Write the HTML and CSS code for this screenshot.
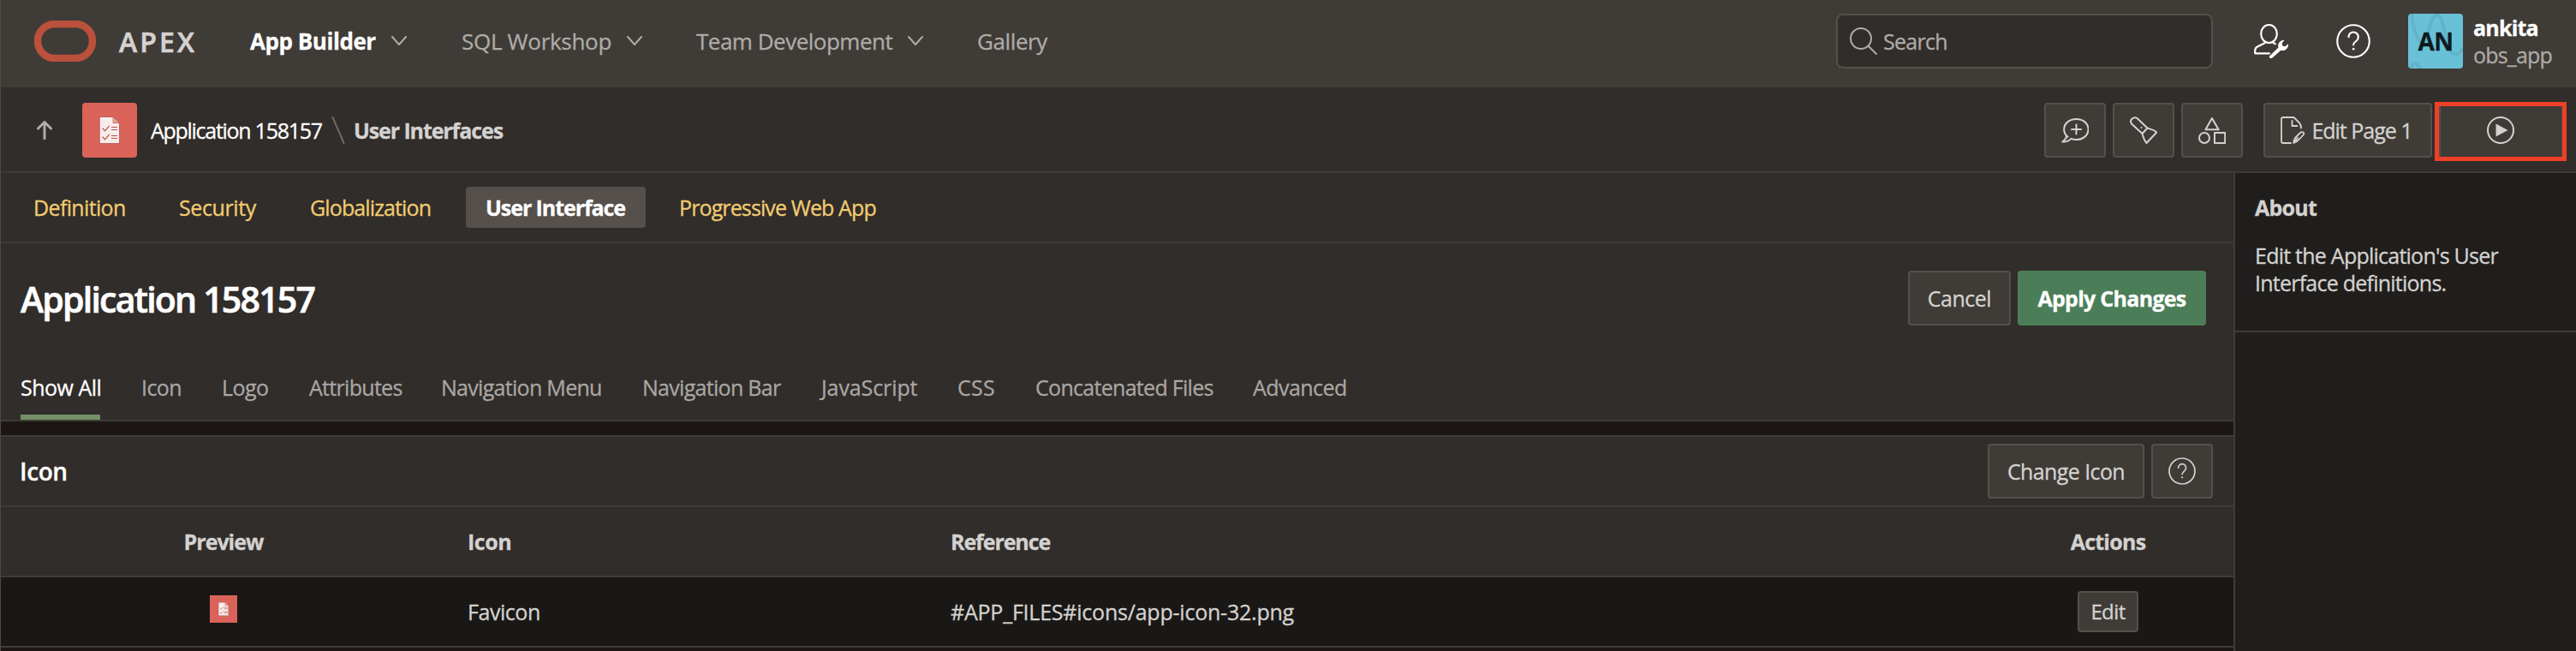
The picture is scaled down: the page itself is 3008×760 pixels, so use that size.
FILE: index.html
```html
<!DOCTYPE html>
<html lang="en">
<head>
<meta charset="utf-8">
<title>User Interfaces</title>
<link rel="stylesheet" href="styles.css">
</head>
<body>
<svg class="defs" width="0" height="0">
  <symbol id="chevron" viewBox="0 0 18 12"><path d="M1 1l8 9 8-9"/></symbol>
  <symbol id="help" viewBox="0 0 32 32"><circle cx="16" cy="16" r="15"/><path d="M11.600 12.200a4.500 4.500 0 1 1 7.400 3.400c-1.700 1.300-2.900 2.100-2.900 4"/><circle class="dot" cx="16.100" cy="23.300" r="1.100"/></symbol>
  <symbol id="doc" viewBox="0 0 64 64">
    <path fill="#f7eceb" stroke="#b5524a" stroke-width=".8" d="M20.500 16.500h16l7 7v24h-23z"/>
    <path fill="#e9a8a2" stroke="#b5524a" stroke-width=".8" d="M36.500 16.500l7 7h-7z"/>
    <path fill="none" stroke="#b5524a" stroke-width="1.200" d="M24 30l2.500 2.800 5-5.600M24 40l2.500 2.800 5-5.600M34.500 28.500h6M34.500 31.500h6M34.500 38.500h6M34.500 41.500h6"/>
  </symbol>
</svg>
<div class="app">
  <header class="header">
    <svg class="logo" viewBox="0 0 72 48"><rect x="4" y="4" width="64" height="40" rx="20"/></svg>
    <span class="brand">APEX</span>
    <nav class="mainnav">
      <a class="current">App Builder<svg class="chev"><use href="#chevron"/></svg></a>
      <a>SQL Workshop<svg class="chev"><use href="#chevron"/></svg></a>
      <a>Team Development<svg class="chev"><use href="#chevron"/></svg></a>
      <a>Gallery</a>
    </nav>
    <div class="search">
      <svg viewBox="0 0 32 32"><circle cx="13" cy="13" r="12"/><path d="M21.500 21.500L31 31"/></svg>
      <span>Search</span>
    </div>
    <svg class="admin" viewBox="0 0 40 40">
      <ellipse cx="17.500" cy="11.500" rx="9.300" ry="10.500"/>
      <path d="M12.500 20.500v1.800L4 26.500q-2.800 1.400-2.800 4.500v3.300H18M22.500 20.500v1.500l2.300 1.200"/>
      <path class="wrench" d="M18 37.500l10.500-10c-1.200-3.600.8-7.600 5.500-8.800l1.500.4-2.800 3.200.6 3.300 3.200.7 2.900-2.900.6 1.200c-.3 4.600-4.200 7.500-8.600 6.200L21.500 39.600c-1 .8-2.300.9-3 0-.8-.7-.9-1.500-.5-2.100z"/>
    </svg>
    <svg class="help"><use href="#help"/></svg>
    <div class="avatar">
      <svg viewBox="0 0 64 64"><path d="M4 0c2 20 8 36 14 33S24 6 32 2s10 20 14 34 12 14 17 6M4 62c2-6 7-5 10 2"/></svg>
      <span>AN</span>
    </div>
    <div class="user"><b>ankita</b><span>obs_app</span></div>
  </header>

  <div class="bar">
    <svg class="up" viewBox="0 0 18 22"><path d="M9 21V2M1.500 9L9 1.500 16.500 9"/></svg>
    <svg class="appicon"><use href="#doc"/></svg>
    <span class="crumb">Application 158157</span>
    <svg class="slash" viewBox="0 0 16 32"><path d="M1.500 1l13 30"/></svg>
    <span class="crumb last">User Interfaces</span>
    <div class="tools">
      <button class="btn square"><svg viewBox="0 0 32 32"><path d="M7.500 23.800C4.800 21.700 3.200 18.700 3.200 15 3.200 8 9.500 3 17.500 3S31.500 8 31.500 15 25.500 27 17.500 27c-2.300 0-4.300-.4-6-1.100C9 28.500 5.500 30 1.200 29.500c3-2 4.800-4 4.700-7M17.500 9.500v11M12 15h11"/></svg></button>
      <button class="btn square"><svg viewBox="0 0 32 32"><path d="M14.500 20L2 8.500C-.8 4.500 4 -.5 8.500 2L20.500 13.500zM20.500 13.500c3.500 1.500 7.500 1.500 10.800 5L19.500 31c-3.500-3.500-3.500-7-5-11"/><circle class="dot" cx="13.500" cy="13" r="1"/></svg></button>
      <button class="btn square"><svg viewBox="0 0 32 32"><path d="M16 2l7.600 13.300H8.400zM19 19h12.200v12H19z"/><circle cx="7" cy="25" r="6"/></svg></button>
      <button class="btn edit"><svg viewBox="0 0 28 32"><path d="M12 31H3q-2 0-2-2V3q0-2 2-2h12.500L22 7.500q2 2 2 6M13.500 5V11H19.500M15.300 31c0-3 1.200-5.500 3.200-7.500l4.500-4.500c1.500-1.500 5.200-1 4 2l-5.500 6c-1.700 2-3.500 3.300-6.200 4zl5-6"/></svg><span>Edit Page 1</span></button>
      <button class="btn run"><svg viewBox="0 0 32 32"><circle cx="16" cy="16" r="15"/><path class="play" d="M10.500 8.500L24.500 16l-14 7.500z"/></svg></button>
    </div>
  </div>

  <div class="body">
    <main class="main">
      <nav class="subnav">
        <a>Definition</a><a>Security</a><a>Globalization</a><a class="current">User Interface</a><a>Progressive Web App</a>
      </nav>
      <div class="title">
        <h1>Application 158157</h1>
        <button class="btn cancel">Cancel</button>
        <button class="btn apply">Apply Changes</button>
      </div>
      <nav class="tabs">
        <a class="current">Show All</a><a>Icon</a><a>Logo</a><a>Attributes</a><a>Navigation Menu</a><a>Navigation Bar</a><a>JavaScript</a><a>CSS</a><a>Concatenated Files</a><a>Advanced</a>
      </nav>
      <section class="region">
        <div class="region-head">
          <h2>Icon</h2>
          <button class="btn change">Change Icon</button>
          <button class="btn square"><svg><use href="#help"/></svg></button>
        </div>
        <div class="row head">
          <div class="center preview">Preview</div><div class="ic">Icon</div><div class="ref">Reference</div><div class="center act">Actions</div>
        </div>
        <div class="row">
          <div class="center"><svg class="favicon"><use href="#doc"/></svg></div>
          <div class="ic">Favicon</div>
          <div class="ref">#APP_FILES#icons/app-icon-32.png</div>
          <div class="center"><button class="btn small">Edit</button></div>
        </div>
      </section>
    </main>
    <aside class="side">
      <section>
        <h3>About</h3>
        <p>Edit the Application's User<br>Interface definitions.</p>
      </section>
    </aside>
  </div>
</div>
</body>
</html>
```
FILE: styles.css
```css
* { box-sizing: border-box; }
body { margin: 0; background: #201e1c; }
.defs { position: absolute; }
svg { display: block; fill: none; stroke: currentColor; stroke-width: 2; stroke-linecap: round; stroke-linejoin: round; flex: none; }
.dot, .play, .wrench { fill: currentColor; stroke: none; }
h1, h2, h3, p { margin: 0; }

.app {
  position: relative;
  width: 3008px;
  height: 760px;
  overflow: hidden;
  font: 25px/32px "Open Sans", "Noto Sans", sans-serif;
  letter-spacing: -.7px;
  -webkit-text-stroke: .3px currentColor;
  color: #d4d2d0;
  white-space: nowrap;
}
.app::before { content: ""; position: absolute; left: 0; top: 0; width: 1px; height: 100%; background: #4b4845; }

.header { display: flex; align-items: center; height: 102px; padding: 0 28px 6px 40px; background: #3f3b36; }
.logo { width: 72px; height: 48px; stroke: #bb503d; stroke-width: 8.500; }
.brand { width: 153px; margin-left: 27px; font-size: 32px; font-weight: 600; letter-spacing: 3.100px; padding-top: 1px; -webkit-text-stroke-width: .7px; }
.mainnav { display: grid; grid-template-columns: 247px 274px 328px 1fr; flex: 1; font-size: 26px; letter-spacing: -.3px; color: #aeaba8; }
.mainnav a { display: flex; align-items: center; }
.mainnav a:nth-child(3) { letter-spacing: -.5px; }
.mainnav a:nth-child(4) { letter-spacing: -.4px; }
.mainnav .current { font-weight: 700; letter-spacing: -.45px; color: #fff; }
.chev { width: 18px; height: 12px; margin-left: 18px; color: #aeaba8; }
.search { display: flex; align-items: center; width: 440px; height: 64px; padding: 0 14px; gap: 7px; border: 2px solid #55504b; border-radius: 8px; background: #312d2a; color: #aeaba8; }
.search svg { width: 32px; height: 32px; }
.admin { width: 40px; height: 40px; margin-left: 48px; margin-right: 56px; color: #fff; stroke-width: 2.200; }
.help { width: 40px; height: 40px; margin-right: 44px; color: #fff; stroke-width: 1.700; }
.avatar { position: relative; display: flex; align-items: center; justify-content: center; width: 64px; height: 64px; border-radius: 4px; overflow: hidden; background: #69c1d7; color: #0d1a1d; font-size: 28px; font-weight: 700; letter-spacing: -.5px; }
.avatar svg { position: absolute; inset: 0; stroke: #60b3c9; stroke-width: 4; }
.avatar span { position: relative; }
.user { display: flex; flex-direction: column; width: 104px; padding-left: 12px; color: #aeaba8; letter-spacing: -.8px; }
.user b { color: #fff; }

.bar { display: flex; align-items: center; height: 98px; padding: 2px 11px 0 43px; background: #312d2a; }
.up { width: 18px; height: 22px; stroke: #aeaba8; stroke-width: 3; }
.appicon { width: 64px; height: 64px; margin: 0 16px 0 35px; border-radius: 4px; background: #da635a; }
.crumb { width: 211px; color: #fff; letter-spacing: -1.280px; }
.slash { width: 16px; height: 32px; margin-right: 10px; color: #6e6a66; }
.crumb.last { font-weight: 700; color: #d4d2d0; letter-spacing: -1.100px; }
.tools { display: flex; align-items: center; margin-left: auto; }

.btn { display: flex; align-items: center; justify-content: center; flex: none; height: 64px; padding: 0; border: 2px solid #55504b; border-radius: 4px; background: #3f3b36; font: inherit; letter-spacing: -.6px; color: #d4d2d0; }
.btn svg { width: 32px; height: 32px; }
.square { width: 72px; margin-right: 8px; }
.edit { width: 197px; margin-left: 16px; padding-right: 3px; gap: 8px; letter-spacing: -1px; }
.edit svg { width: 28px; stroke-width: 1.800; }
.run { width: 154px; height: 69px; margin: 3px 0 0 3px; border: 5px solid #ee4026; border-radius: 0; box-shadow: inset 2px 0 #55504b, inset -1px 0 #55504b; }
.run svg { margin-top: -4px; }

.body { display: flex; height: 560px; border-top: 2px solid #3f3b37; }
.main { width: 2608px; background: #1c1715; }
.side { flex: 1; border-left: 2px solid #3f3b37; background: #201e1c; }
.side section { height: 186px; padding: 24px 24px 24px 23px; border-bottom: 2px solid #3f3b37; letter-spacing: -.76px; }
.side h3 { margin-bottom: 24px; font-size: 25px; }

.subnav { display: grid; grid-template-columns: 170px 153px 205px 226px 1fr; align-items: center; height: 82px; padding-left: 16px; border-bottom: 2px solid #3f3b37; background: #312d2a; color: #f1cc71; }
.subnav a { padding: 8px 23px; letter-spacing: -.65px; }
.subnav a:nth-child(2) { letter-spacing: -.4px; }
.subnav a:nth-child(n+3) { letter-spacing: -.88px; }
.subnav .current { width: 210px; border-radius: 4px; background: #55504b; color: #fff; font-weight: 700; letter-spacing: -1.070px !important; }

.title { display: flex; align-items: center; gap: 8px; height: 128px; padding: 0 32px 0 24px; background: #312d2a; }
.title h1 { flex: 1; font-size: 41px; line-height: 48px; font-weight: 600; letter-spacing: -1.780px; color: #fff; padding-top: 2px; -webkit-text-stroke-width: .7px; }
.cancel { width: 120px; letter-spacing: -.5px; }
.apply { width: 220px; border-color: #4b7e58; background: #4b7e58; color: #fff; font-weight: 700; letter-spacing: -.72px; }

.tabs { display: grid; grid-template-columns: 141px 94px 102px 154px 235px 209px 159px 91px 254px 1fr; height: 80px; padding-left: 24px; border-bottom: 2px solid #3f3b37; background: #312d2a; color: #a9a6a3; }
.tabs a { padding-top: 24px; }
.tabs .current { width: 93px; border-bottom: 6px solid #739067; color: #fff; letter-spacing: -.5px; }
.tabs a:nth-child(2), .tabs a:nth-child(3), .tabs a:nth-child(10) { letter-spacing: -.55px; }
.tabs a:nth-child(7) { letter-spacing: -.1px; }
.tabs a:nth-child(8) { letter-spacing: .300px; }

.region { margin-top: 16px; border-top: 2px solid #3f3b37; background: #312d2a; }
.region-head { display: flex; align-items: center; height: 82px; padding: 0 16px 0 23px; border-bottom: 2px solid #3f3b37; }
.region-head h2 { flex: 1; font-size: 28px; font-weight: 600; letter-spacing: -.4px; color: #fff; }
.change { width: 183px; margin-right: 8px; }
.region-head svg { stroke-width: 1.700; }
.row { display: grid; grid-template-columns: 522px 564px 1229px 293px; align-items: center; height: 82px; border-bottom: 2px solid #3f3b37; background: #1a1816; }
.row.head { background: #312d2a; font-weight: 700; letter-spacing: -1px; }
.row .ic, .row .ref { padding-left: 24px; }
.row .ic { letter-spacing: -.45px; }
.row .ref { letter-spacing: -.22px; }
.row.head .ref { letter-spacing: -1.080px; }
.act { letter-spacing: -.75px; }
.center { display: flex; justify-content: center; }
.favicon { width: 32px; height: 32px; margin-bottom: 6px; background: #da635a; }
.small { width: 71px; height: 48px; font-size: 24px; }
```
